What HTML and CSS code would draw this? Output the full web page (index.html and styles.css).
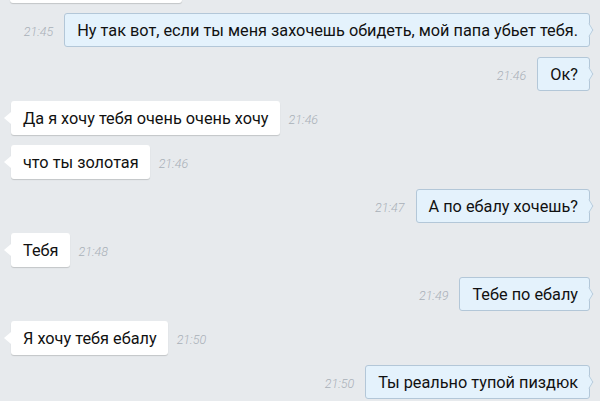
FILE: index.html
```html
<!DOCTYPE html>
<html lang="ru">

<head>
    <meta charset="UTF-8">
    <meta name="viewport" content="width=device-width, initial-scale=1.0">
    <title>Диалог</title>
    <link rel="stylesheet" href="styles.css">
</head>

<body>
    <div class="chat">
        <!-- previous message, scrolled out of view -->
        <div class="message in">
            <div class="bubble hidden-top"></div>
        </div>

        <div class="message out">
            <span class="time">21:45</span>
            <div class="bubble">Ну так вот, если ты меня захочешь обидеть, мой папа убьет тебя.</div>
        </div>

        <div class="message out">
            <span class="time">21:46</span>
            <div class="bubble">Ок?</div>
        </div>

        <div class="message in">
            <div class="bubble">Да я хочу тебя очень очень хочу</div>
            <span class="time">21:46</span>
        </div>

        <div class="message in">
            <div class="bubble">что ты золотая</div>
            <span class="time">21:46</span>
        </div>

        <div class="message out">
            <span class="time">21:47</span>
            <div class="bubble">А по ебалу хочешь?</div>
        </div>

        <div class="message in">
            <div class="bubble">Тебя</div>
            <span class="time">21:48</span>
        </div>

        <div class="message out">
            <span class="time">21:49</span>
            <div class="bubble">Тебе по ебалу</div>
        </div>

        <div class="message in">
            <div class="bubble">Я хочу тебя ебалу</div>
            <span class="time">21:50</span>
        </div>

        <div class="message out">
            <span class="time">21:50</span>
            <div class="bubble">Ты реально тупой пиздюк</div>
        </div>
    </div>
</body>

</html>
```

FILE: styles.css
```css
* {
    margin: 0;
    padding: 0;
    box-sizing: border-box;
}

body {
    background: #e7eaed;
    font-family: Roboto, 'Noto Sans', sans-serif;
    color: #111;
    overflow: hidden;
}

.chat {
    display: flex;
    flex-direction: column;
    gap: 10px;
    margin-top: -31px;
    padding: 0 10px 0 11px;
}

.message {
    display: flex;
    align-items: center;
}

.message.out {
    justify-content: flex-end;
}

.bubble {
    position: relative;
    height: 34px;
    padding: 0 11px 0 12px;
    display: flex;
    align-items: center;
    font-size: 16.3px;
    white-space: nowrap;
    border-radius: 3px;
}

.bubble.hidden-top {
    width: 172px;
    margin-left: -1px;
}

.in .bubble {
    background: #ffffff;
    box-shadow: 0 1px 1px rgba(0, 0, 0, 0.16);
}

.in .bubble::before {
    content: "";
    position: absolute;
    left: -7px;
    top: 50%;
    margin-top: -6px;
    border-style: solid;
    border-width: 6px 7px 6px 0;
    border-color: transparent #ffffff transparent transparent;
}

.out .bubble {
    background: #e4f2fc;
    border: 1px solid #b3c7d8;
}

.out .bubble::after {
    content: "";
    position: absolute;
    right: -5px;
    top: 50%;
    width: 9px;
    height: 9px;
    margin-top: -5px;
    background: #e4f2fc;
    border-top: 1px solid #b3c7d8;
    border-right: 1px solid #b3c7d8;
    transform: scaleX(0.6) rotate(45deg);
}

.time {
    font-size: 12.5px;
    font-style: italic;
    font-weight: 300;
    color: #a9b0b8;
    margin-top: 2px;
}

.in .time {
    margin-left: 9px;
}

.out .time {
    margin-right: 11px;
}
```
